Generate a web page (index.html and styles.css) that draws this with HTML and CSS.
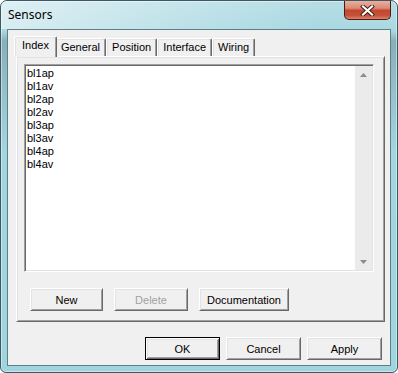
FILE: index.html
```html
<!DOCTYPE html>
<html>
<head>
<meta charset="utf-8">
<title>Sensors</title>
<link rel="stylesheet" href="styles.css">
</head>
<body>
<div class="window">
  <div class="titlebar">
    <span class="title">Sensors</span>
    <div class="close">
      <svg width="15" height="11" viewBox="0 0 15 11">
        <path d="M3 1.5 L12 9.5 M12 1.5 L3 9.5" stroke="#3a1a14" stroke-width="4" stroke-linecap="square" fill="none"/>
        <path d="M3 1.5 L12 9.5 M12 1.5 L3 9.5" stroke="#ffffff" stroke-width="2.2" stroke-linecap="square" fill="none"/>
      </svg>
    </div>
  </div>
  <div class="client">
    <div class="tabs">
      <div class="tab active">Index</div>
      <div class="tab">General</div>
      <div class="tab">Position</div>
      <div class="tab">Interface</div>
      <div class="tab">Wiring</div>
    </div>
    <div class="panel">
      <div class="listbox">
        <ul class="items">
          <li>bl1ap</li>
          <li>bl1av</li>
          <li>bl2ap</li>
          <li>bl2av</li>
          <li>bl3ap</li>
          <li>bl3av</li>
          <li>bl4ap</li>
          <li>bl4av</li>
        </ul>
        <div class="scrollbar">
          <div class="arrow">
            <svg width="7" height="4" viewBox="0 0 7 4"><path d="M3.5 0 L7 4 L0 4 Z" fill="#8c8c8c"/></svg>
          </div>
          <div class="arrow">
            <svg width="7" height="4" viewBox="0 0 7 4"><path d="M0 0 L7 0 L3.5 4 Z" fill="#8c8c8c"/></svg>
          </div>
        </div>
      </div>
      <div class="actions">
        <button class="btn w-new">New</button>
        <button class="btn w-delete" disabled>Delete</button>
        <button class="btn w-doc">Documentation</button>
      </div>
    </div>
    <div class="footer">
      <button class="btn default w-std">OK</button>
      <button class="btn w-std">Cancel</button>
      <button class="btn w-std">Apply</button>
    </div>
  </div>
</div>
</body>
</html>
```
FILE: styles.css
```css
* { box-sizing: border-box; }
html, body { margin: 0; padding: 0; }
body {
  width: 398px;
  height: 373px;
  overflow: hidden;
  background: #ffffff;
  font-family: "Liberation Sans", Arial, sans-serif;
  font-size: 11px;
  color: #000;
}
.window {
  width: 398px;
  height: 373px;
  border: 1px solid #3b5863;
  border-radius: 7px 7px 6px 6px;
  background:
    linear-gradient(180deg, rgba(96,116,126,0) 0, rgba(96,116,126,0) 30px, rgba(96,116,126,0.4) 40px, rgba(96,116,126,0) 150px),
    linear-gradient(180deg, #b7dee6 0, #a4d6e0 40px, #a0d4de 100%);
  display: flex;
  flex-direction: column;
  overflow: hidden;
  box-shadow: inset 0 0 0 1px rgba(255,255,255,0.45);
}
.titlebar {
  height: 28px;
  display: flex;
  align-items: flex-start;
  padding: 0 6px 0 7px;
  background: linear-gradient(90deg, rgba(255,255,255,0.55), rgba(255,255,255,0.15) 55%, rgba(255,255,255,0) 80%);
}
.title {
  font-family: "Noto Sans", "Open Sans", sans-serif;
  font-size: 12px;
  line-height: 16px;
  margin-top: 6px;
}
.close {
  margin-left: auto;
  width: 47px;
  height: 19px;
  border: 1px solid #4a1d14;
  border-top: none;
  border-radius: 0 0 5px 5px;
  background: linear-gradient(180deg, #eab0a0 0, #d98a74 40%, #c4472d 52%, #c6503a 80%, #dc8466 100%);
  display: flex;
  align-items: center;
  justify-content: center;
}
.client {
  flex: 1;
  margin: 0 6px 6px;
  border: 1px solid #5f7f88;
  background: #f0f0f0;
  display: flex;
  flex-direction: column;
}
.tabs {
  display: flex;
  align-items: flex-end;
  height: 26px;
  padding: 6px 0 0 8px;
}
.tab {
  height: 18px;
  padding: 0 5px;
  line-height: 16px;
  border: 1px solid #fff;
  border-right-color: #696969;
  border-bottom: none;
  border-radius: 2px 2px 0 0;
  box-shadow: inset -1px 0 #a0a0a0, inset 1px 1px #e3e3e3;
  background: #f0f0f0;
  white-space: nowrap;
}
.tab.active {
  position: relative;
  z-index: 1;
  height: 21px;
  margin: 0 -2px -1px;
  padding: 0 7px;
  line-height: 17px;
}
.panel {
  margin: 0 5px 0 8px;
  height: 266px;
  border: 1px solid;
  border-color: #fff #696969 #696969 #fff;
  box-shadow: inset 1px 1px #e3e3e3, inset -1px -1px #a0a0a0;
  padding: 7px 10px 0 7px;
  display: flex;
  flex-direction: column;
}
.listbox {
  height: 208px;
  display: flex;
  border: 1px solid;
  border-color: #a0a0a0 #fff #fff #a0a0a0;
  box-shadow: inset 1px 1px #696969, inset -1px -1px #e3e3e3;
  padding: 1px;
  background: #fff;
}
.items {
  flex: 1;
  list-style: none;
  margin: 0;
  padding: 1px 0 0 1px;
  line-height: 13px;
}
.scrollbar {
  width: 17px;
  background: #ebebeb;
  display: flex;
  flex-direction: column;
  justify-content: space-between;
}
.arrow {
  height: 17px;
  display: flex;
  align-items: center;
  justify-content: center;
}
.actions {
  display: flex;
  gap: 11px;
  margin: 16px 0 0 6px;
}
.btn {
  height: 23px;
  padding: 0;
  margin: 0;
  font: inherit;
  color: #000;
  background: #f0f0f0;
  border: 1px solid;
  border-color: #fff #696969 #696969 #fff;
  box-shadow: inset 1px 1px #e3e3e3, inset -1px -1px #a0a0a0;
  display: flex;
  align-items: center;
  justify-content: center;
}
.btn:disabled { color: #a0a0a0; }
.btn.default {
  border: 1px solid #000;
  box-shadow: inset 1px 1px #fff, inset -1px -1px #696969, inset 2px 2px #e3e3e3, inset -2px -2px #a0a0a0;
}
.w-new { width: 73px; }
.w-delete { width: 74px; }
.w-doc { width: 90px; }
.w-std { width: 75px; }
.footer {
  display: flex;
  justify-content: flex-end;
  gap: 6px;
  margin-top: 15px;
  padding-right: 8px;
}
```
